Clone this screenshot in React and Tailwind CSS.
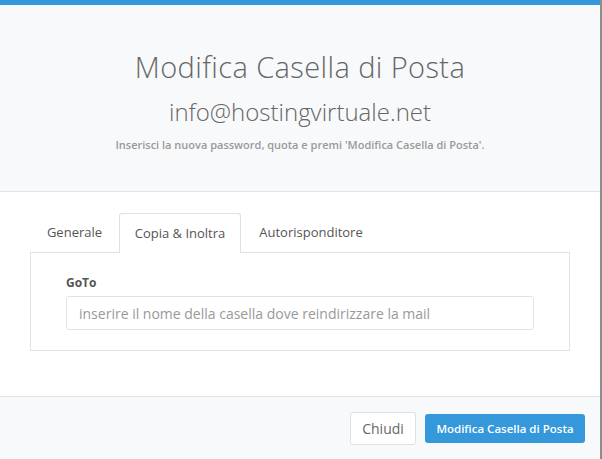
export default function App() {
  return (
    <div className="flex h-[459px] w-[602px] bg-[#8c8c8c]" style={{ fontFamily: '"Open Sans", sans-serif' }}>
      <div className="flex h-full w-[600px] flex-col bg-white">
        <div className="h-[5px] bg-[#3498db]" />
        <div className="flex h-[187px] flex-col items-center border-b border-[#e3e3e3] bg-[#f8f9fb] pt-[42px]">
          <h1 className="text-[29px] font-light leading-[40px] tracking-[0.4px] text-[#666]">Modifica Casella di Posta</h1>
          <h2 className="mt-[9px] text-[24px] font-light leading-[32px] text-[#666]">info@hostingvirtuale.net</h2>
          <p className="mt-[9px] text-[11px] font-semibold leading-[15px] text-[#999]">Inserisci la nuova password, quota e premi 'Modifica Casella di Posta'.</p>
        </div>
        <div className="flex h-[204px] flex-col bg-white px-[30px] pt-[21px]">
          <div className="flex h-[39px] items-stretch text-[13px] text-[#555]">
            <div className="flex w-[89px] items-center justify-center">Generale</div>
            <div className="relative -mb-px flex w-[122px] items-center justify-center rounded-t-[3px] border border-b-0 border-[#e0e0e0] bg-white">Copia &amp; Inoltra</div>
            <div className="flex w-[140px] items-center justify-center">Autorisponditore</div>
          </div>
          <div className="h-[99px] border border-[#e3e3e3] px-[35px] pt-[22px]">
            <div className="text-[12px] font-bold leading-[16px] text-[#555]">GoTo</div>
            <div className="mt-[5px] flex h-[34px] items-center rounded-[3px] border border-[#e3e3e3] px-[12px] text-[14px] text-[#999]">inserire il nome della casella dove reindirizzare la mail</div>
          </div>
        </div>
        <div className="flex flex-1 items-start justify-end gap-[9px] border-t border-[#e3e3e3] bg-[#f8f9fb] pr-[15px] pt-[15px]">
          <button className="h-[33px] w-[66px] rounded-[3px] border border-[#e0e0e0] bg-white text-[14px] text-[#666]">Chiudi</button>
          <button className="mt-[2px] h-[29px] w-[160px] rounded-[3px] bg-[#3498db] text-[11.5px] font-semibold text-white">Modifica Casella di Posta</button>
        </div>
      </div>
    </div>
  );
}
